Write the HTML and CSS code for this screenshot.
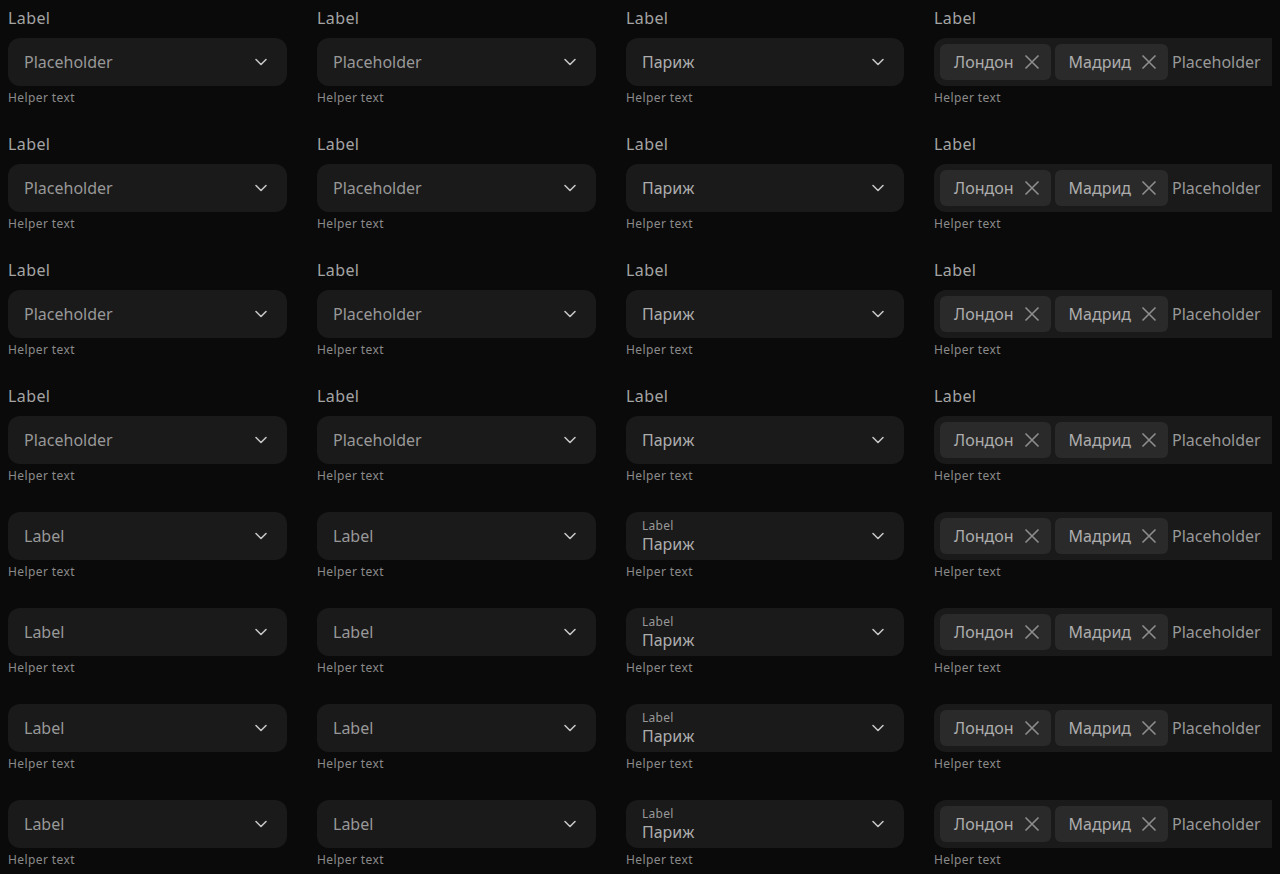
FILE: index.html
```html
<!DOCTYPE html>
<html lang="ru">
<head>
<meta charset="utf-8">
<title>Select fields</title>
<link rel="stylesheet" href="styles.css">
</head>
<body>
<svg width="0" height="0" style="position:absolute">
  <defs>
    <symbol id="chev" viewBox="0 0 16 16"><path d="M3 5.5l5 5 5-5" fill="none" stroke="currentColor" stroke-width="1.6" stroke-linecap="round" stroke-linejoin="round"/></symbol>
    <symbol id="cross" viewBox="0 0 16 16"><path d="M1.5 1.5L14.5 14.5M14.5 1.5L1.5 14.5" fill="none" stroke="currentColor" stroke-width="1.6"/></symbol>
  </defs>
</svg>
<div class="grid">
  <!-- rows 1-4 -->
  <div class="field"><div class="label">Label</div><div class="box"><span class="ph">Placeholder</span><svg class="chev"><use href="#chev"/></svg></div><div class="helper">Helper text</div></div>
  <div class="field"><div class="label">Label</div><div class="box"><span class="ph">Placeholder</span><svg class="chev"><use href="#chev"/></svg></div><div class="helper">Helper text</div></div>
  <div class="field"><div class="label">Label</div><div class="box"><span class="val">Париж</span><svg class="chev"><use href="#chev"/></svg></div><div class="helper">Helper text</div></div>
  <div class="field"><div class="label">Label</div><div class="box multi"><span class="chip">Лондон<svg class="x"><use href="#cross"/></svg></span><span class="chip">Мадрид<svg class="x"><use href="#cross"/></svg></span><span class="ph">Placeholder</span></div><div class="helper">Helper text</div></div>

  <div class="field"><div class="label">Label</div><div class="box"><span class="ph">Placeholder</span><svg class="chev"><use href="#chev"/></svg></div><div class="helper">Helper text</div></div>
  <div class="field"><div class="label">Label</div><div class="box"><span class="ph">Placeholder</span><svg class="chev"><use href="#chev"/></svg></div><div class="helper">Helper text</div></div>
  <div class="field"><div class="label">Label</div><div class="box"><span class="val">Париж</span><svg class="chev"><use href="#chev"/></svg></div><div class="helper">Helper text</div></div>
  <div class="field"><div class="label">Label</div><div class="box multi"><span class="chip">Лондон<svg class="x"><use href="#cross"/></svg></span><span class="chip">Мадрид<svg class="x"><use href="#cross"/></svg></span><span class="ph">Placeholder</span></div><div class="helper">Helper text</div></div>

  <div class="field"><div class="label">Label</div><div class="box"><span class="ph">Placeholder</span><svg class="chev"><use href="#chev"/></svg></div><div class="helper">Helper text</div></div>
  <div class="field"><div class="label">Label</div><div class="box"><span class="ph">Placeholder</span><svg class="chev"><use href="#chev"/></svg></div><div class="helper">Helper text</div></div>
  <div class="field"><div class="label">Label</div><div class="box"><span class="val">Париж</span><svg class="chev"><use href="#chev"/></svg></div><div class="helper">Helper text</div></div>
  <div class="field"><div class="label">Label</div><div class="box multi"><span class="chip">Лондон<svg class="x"><use href="#cross"/></svg></span><span class="chip">Мадрид<svg class="x"><use href="#cross"/></svg></span><span class="ph">Placeholder</span></div><div class="helper">Helper text</div></div>

  <div class="field"><div class="label">Label</div><div class="box"><span class="ph">Placeholder</span><svg class="chev"><use href="#chev"/></svg></div><div class="helper">Helper text</div></div>
  <div class="field"><div class="label">Label</div><div class="box"><span class="ph">Placeholder</span><svg class="chev"><use href="#chev"/></svg></div><div class="helper">Helper text</div></div>
  <div class="field"><div class="label">Label</div><div class="box"><span class="val">Париж</span><svg class="chev"><use href="#chev"/></svg></div><div class="helper">Helper text</div></div>
  <div class="field"><div class="label">Label</div><div class="box multi"><span class="chip">Лондон<svg class="x"><use href="#cross"/></svg></span><span class="chip">Мадрид<svg class="x"><use href="#cross"/></svg></span><span class="ph">Placeholder</span></div><div class="helper">Helper text</div></div>

  <!-- rows 5-8 -->
  <div class="field"><div class="box"><span class="ph">Label</span><svg class="chev"><use href="#chev"/></svg></div><div class="helper">Helper text</div></div>
  <div class="field"><div class="box"><span class="ph">Label</span><svg class="chev"><use href="#chev"/></svg></div><div class="helper">Helper text</div></div>
  <div class="field"><div class="box"><span class="stack"><span class="mini">Label</span><span class="val">Париж</span></span><svg class="chev"><use href="#chev"/></svg></div><div class="helper">Helper text</div></div>
  <div class="field"><div class="box multi"><span class="chip">Лондон<svg class="x"><use href="#cross"/></svg></span><span class="chip">Мадрид<svg class="x"><use href="#cross"/></svg></span><span class="ph">Placeholder</span></div><div class="helper">Helper text</div></div>

  <div class="field"><div class="box"><span class="ph">Label</span><svg class="chev"><use href="#chev"/></svg></div><div class="helper">Helper text</div></div>
  <div class="field"><div class="box"><span class="ph">Label</span><svg class="chev"><use href="#chev"/></svg></div><div class="helper">Helper text</div></div>
  <div class="field"><div class="box"><span class="stack"><span class="mini">Label</span><span class="val">Париж</span></span><svg class="chev"><use href="#chev"/></svg></div><div class="helper">Helper text</div></div>
  <div class="field"><div class="box multi"><span class="chip">Лондон<svg class="x"><use href="#cross"/></svg></span><span class="chip">Мадрид<svg class="x"><use href="#cross"/></svg></span><span class="ph">Placeholder</span></div><div class="helper">Helper text</div></div>

  <div class="field"><div class="box"><span class="ph">Label</span><svg class="chev"><use href="#chev"/></svg></div><div class="helper">Helper text</div></div>
  <div class="field"><div class="box"><span class="ph">Label</span><svg class="chev"><use href="#chev"/></svg></div><div class="helper">Helper text</div></div>
  <div class="field"><div class="box"><span class="stack"><span class="mini">Label</span><span class="val">Париж</span></span><svg class="chev"><use href="#chev"/></svg></div><div class="helper">Helper text</div></div>
  <div class="field"><div class="box multi"><span class="chip">Лондон<svg class="x"><use href="#cross"/></svg></span><span class="chip">Мадрид<svg class="x"><use href="#cross"/></svg></span><span class="ph">Placeholder</span></div><div class="helper">Helper text</div></div>

  <div class="field"><div class="box"><span class="ph">Label</span><svg class="chev"><use href="#chev"/></svg></div><div class="helper">Helper text</div></div>
  <div class="field"><div class="box"><span class="ph">Label</span><svg class="chev"><use href="#chev"/></svg></div><div class="helper">Helper text</div></div>
  <div class="field"><div class="box"><span class="stack"><span class="mini">Label</span><span class="val">Париж</span></span><svg class="chev"><use href="#chev"/></svg></div><div class="helper">Helper text</div></div>
  <div class="field"><div class="box multi"><span class="chip">Лондон<svg class="x"><use href="#cross"/></svg></span><span class="chip">Мадрид<svg class="x"><use href="#cross"/></svg></span><span class="ph">Placeholder</span></div><div class="helper">Helper text</div></div>
</div>
</body>
</html>
```
FILE: styles.css
```css
html, body {
  overflow: hidden;
}
body {
  margin: 8px;
  background: #0a0a0a;
  font-family: "Noto Sans", "Liberation Sans", sans-serif;
  color: #a6a6a6;
}
.grid {
  display: grid;
  grid-template-columns: 279px 279px 278px 420px;
  column-gap: 30px;
  row-gap: 28px;
}
.field {
  display: flex;
  flex-direction: column;
}
.label {
  font-size: 16px;
  line-height: 21px;
  letter-spacing: 0.4px;
  color: #a4a4a4;
  margin-bottom: 9px;
}
.box {
  height: 48px;
  box-sizing: border-box;
  background: #1a1a1a;
  border-radius: 12px;
  display: flex;
  align-items: center;
  padding: 0 18px 0 16px;
  font-size: 16px;
}
.ph {
  flex: 1;
  color: #989898;
}
.val {
  flex: 1;
  color: #adadad;
}
.stack {
  flex: 1;
  display: flex;
  flex-direction: column;
}
.stack .mini {
  font-size: 12px;
  line-height: 14px;
  letter-spacing: 0.3px;
  color: #989898;
}
.stack .val {
  line-height: 20px;
  margin-top: 1px;
}
.chev {
  width: 16px;
  height: 16px;
  color: #c4c4c4;
  flex: none;
}
.box.multi {
  padding: 0 6px;
  gap: 4px;
}
.box.multi .ph {
  flex: none;
}
.chip {
  height: 36px;
  display: inline-flex;
  align-items: center;
  gap: 10px;
  padding: 0 11px 0 14px;
  background: #2a2a2a;
  border-radius: 6px;
  color: #adadad;
}
.x {
  width: 16px;
  height: 16px;
  color: #8e8e8e;
}
.helper {
  margin-top: 4px;
  font-size: 12px;
  line-height: 16px;
  letter-spacing: 0.4px;
  color: #8a8a8a;
}
```
